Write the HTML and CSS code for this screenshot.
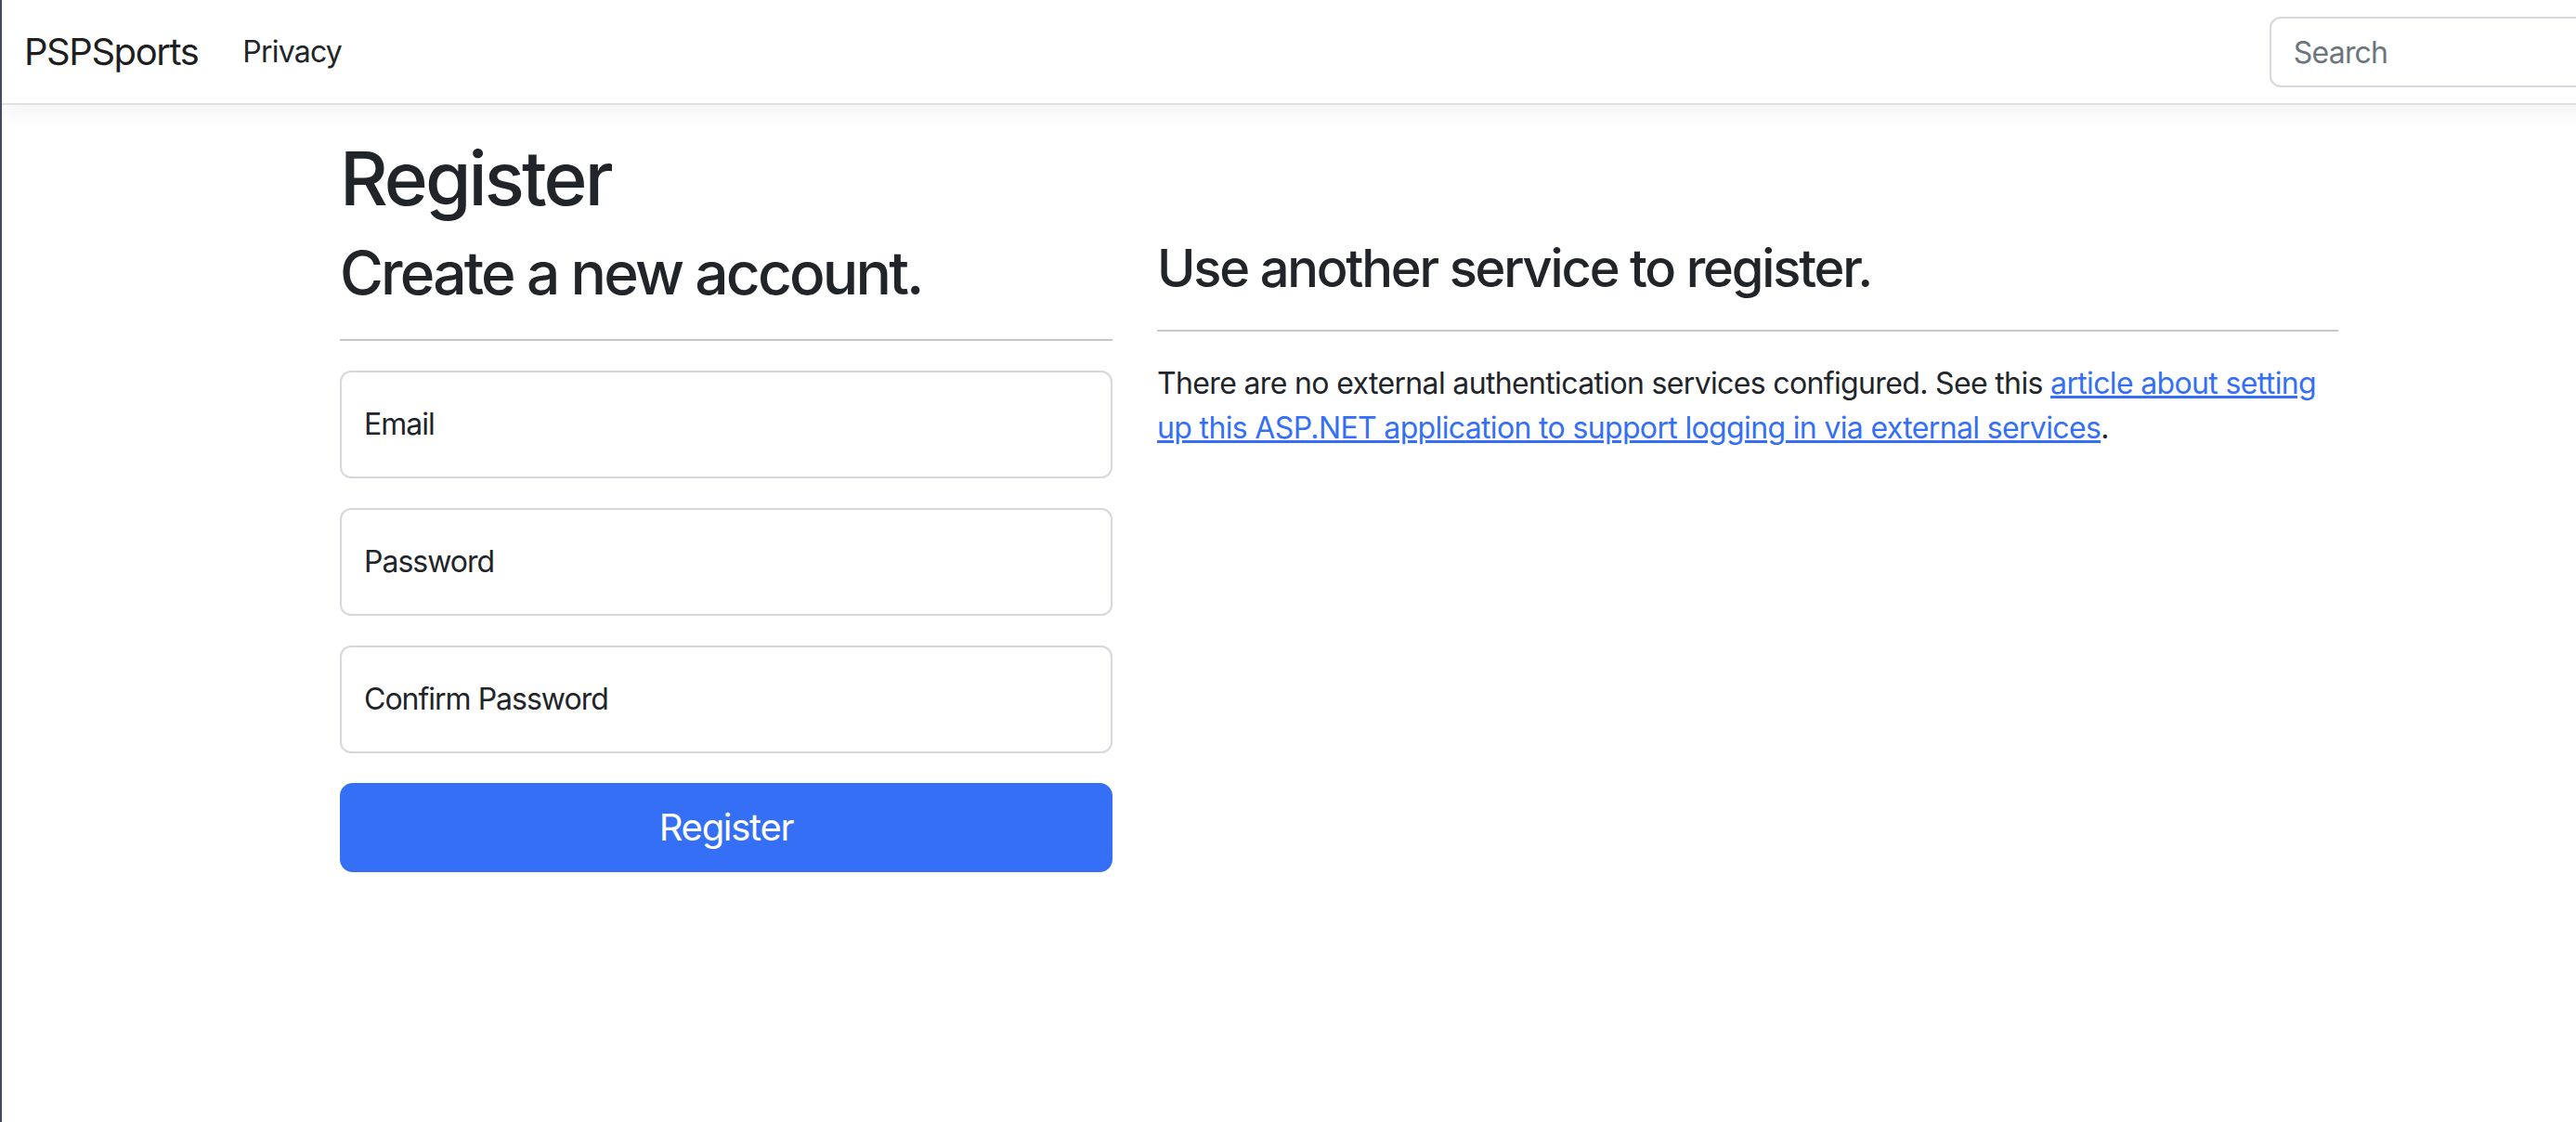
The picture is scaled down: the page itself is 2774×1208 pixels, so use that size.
FILE: index.html
```
<!DOCTYPE html>
<html lang="en">
<head>
<meta charset="utf-8">
<title>Register - PSPSports</title>
<link rel="stylesheet" href="styles.css">
</head>
<body>
<div class="viewport">
  <header>
    <nav class="navbar">
      <a class="brand" href="#">PSPSports</a>
      <ul class="nav">
        <li><a class="nav-link" href="#">Privacy</a></li>
      </ul>
      <form class="search">
        <input class="search-input" type="search" placeholder="Search">
        <button class="btn-outline" type="button">Search</button>
      </form>
    </nav>
  </header>
  <div class="container">
    <main class="main">
      <h1>Register</h1>
      <div class="row">
        <div class="col-4">
          <form class="register-form">
            <h2>Create a new account.</h2>
            <hr>
            <div class="form-floating">
              <input class="form-control" type="email" id="email" placeholder=" ">
              <label for="email">Email</label>
            </div>
            <div class="form-floating">
              <input class="form-control" type="password" id="password" placeholder=" ">
              <label for="password">Password</label>
            </div>
            <div class="form-floating">
              <input class="form-control" type="password" id="confirm" placeholder=" ">
              <label for="confirm">Confirm Password</label>
            </div>
            <button class="btn-primary" type="button">Register</button>
          </form>
        </div>
        <div class="col-6">
          <section>
            <h3>Use another service to register.</h3>
            <hr>
            <div>
              <p class="note">There are no external authentication services configured. See this <a class="link" href="#">article about setting up this ASP.NET application to support logging in via external services</a>.</p>
            </div>
          </section>
        </div>
      </div>
    </main>
  </div>
</div>
</body>
</html>
```
FILE: styles.css
```
html, body {
  margin: 0;
  height: 100%;
  overflow: hidden;
}
body {
  border-left: 2px solid #414b63;
  font-family: Inter, "Noto Sans", "Liberation Sans", sans-serif;
  font-size: 32px;
  line-height: 1.5;
  letter-spacing: -0.8px;
  color: #212529;
  background: #fff;
}
*, *::before, *::after {
  box-sizing: border-box;
}
.viewport {
  width: 3320px;
}
.navbar {
  display: flex;
  align-items: center;
  padding: 16px 24px 15px;
  background: #fff;
  border-bottom: 2px solid #dee2e6;
  box-shadow: 0 8px 24px rgba(0, 0, 0, 0.05);
  margin-bottom: 31px;
}
.brand {
  font-size: 40px;
  line-height: 60px;
  letter-spacing: -1.45px;
  padding: 7px 0;
  margin-right: 32px;
  color: rgba(0, 0, 0, 0.9);
  text-decoration: none;
}
.nav {
  display: flex;
  list-style: none;
  margin: 0;
  padding: 0;
  flex: 1;
}
.nav-link {
  display: block;
  padding: 16px;
  color: #212529;
  text-decoration: none;
}
.search {
  display: flex;
  gap: 16px;
}
.search-input {
  width: 680px;
  height: 76px;
  padding: 12px 24px;
  font: inherit;
  letter-spacing: -0.8px;
  color: #212529;
  border: 2px solid #d5d8dc;
  border-radius: 12px;
  background: #fff;
}
.search-input::placeholder {
  color: #6c757d;
}
.btn-outline {
  height: 76px;
  padding: 12px 24px;
  font: inherit;
  color: #198754;
  background: #fff;
  border: 2px solid #198754;
  border-radius: 12px;
}
.container {
  width: 2640px;
  margin: 0 auto;
  padding: 0 24px;
}
.main {
  padding-bottom: 32px;
}
h1, h2, h3 {
  font-weight: 500;
  line-height: 1.2;
  margin: 0 0 16px;
}
h1 {
  font-size: 80px;
  letter-spacing: -2.9px;
}
h2 {
  font-size: 64px;
  letter-spacing: -2.85px;
}
h3 {
  font-size: 56px;
  letter-spacing: -2.2px;
}
.row {
  display: flex;
  margin: 0 -24px;
}
.col-4 {
  width: 880px;
  padding: 0 24px;
}
.col-6 {
  width: 1320px;
  padding: 0 24px;
}
.register-form {
  margin: 0;
}
hr {
  margin: 32px 0;
  border: 0;
  border-top: 2px solid #212529;
  opacity: 0.25;
}
.form-floating {
  position: relative;
  margin-bottom: 32px;
}
.form-control {
  display: block;
  width: 100%;
  height: 116px;
  padding: 32px 24px;
  font: inherit;
  color: #212529;
  border: 2px solid #d5d8dc;
  border-radius: 12px;
  background: #fff;
}
.form-floating label {
  position: absolute;
  top: 0;
  left: 0;
  height: 100%;
  padding: 32px 24px;
  border: 2px solid transparent;
  line-height: 48px;
  letter-spacing: -1px;
  color: #212529;
  pointer-events: none;
}
.btn-primary {
  display: block;
  width: 100%;
  height: 96px;
  padding: 16px 32px;
  font: inherit;
  font-size: 40px;
  line-height: 60px;
  letter-spacing: -1.3px;
  color: #fff;
  background: #346ff5;
  border: 2px solid #346ff5;
  border-radius: 14px;
}
p {
  margin: 0 0 32px;
}
.note {
  letter-spacing: -0.65px;
}
.link {
  color: #346ff5;
  text-decoration: underline;
}
```
